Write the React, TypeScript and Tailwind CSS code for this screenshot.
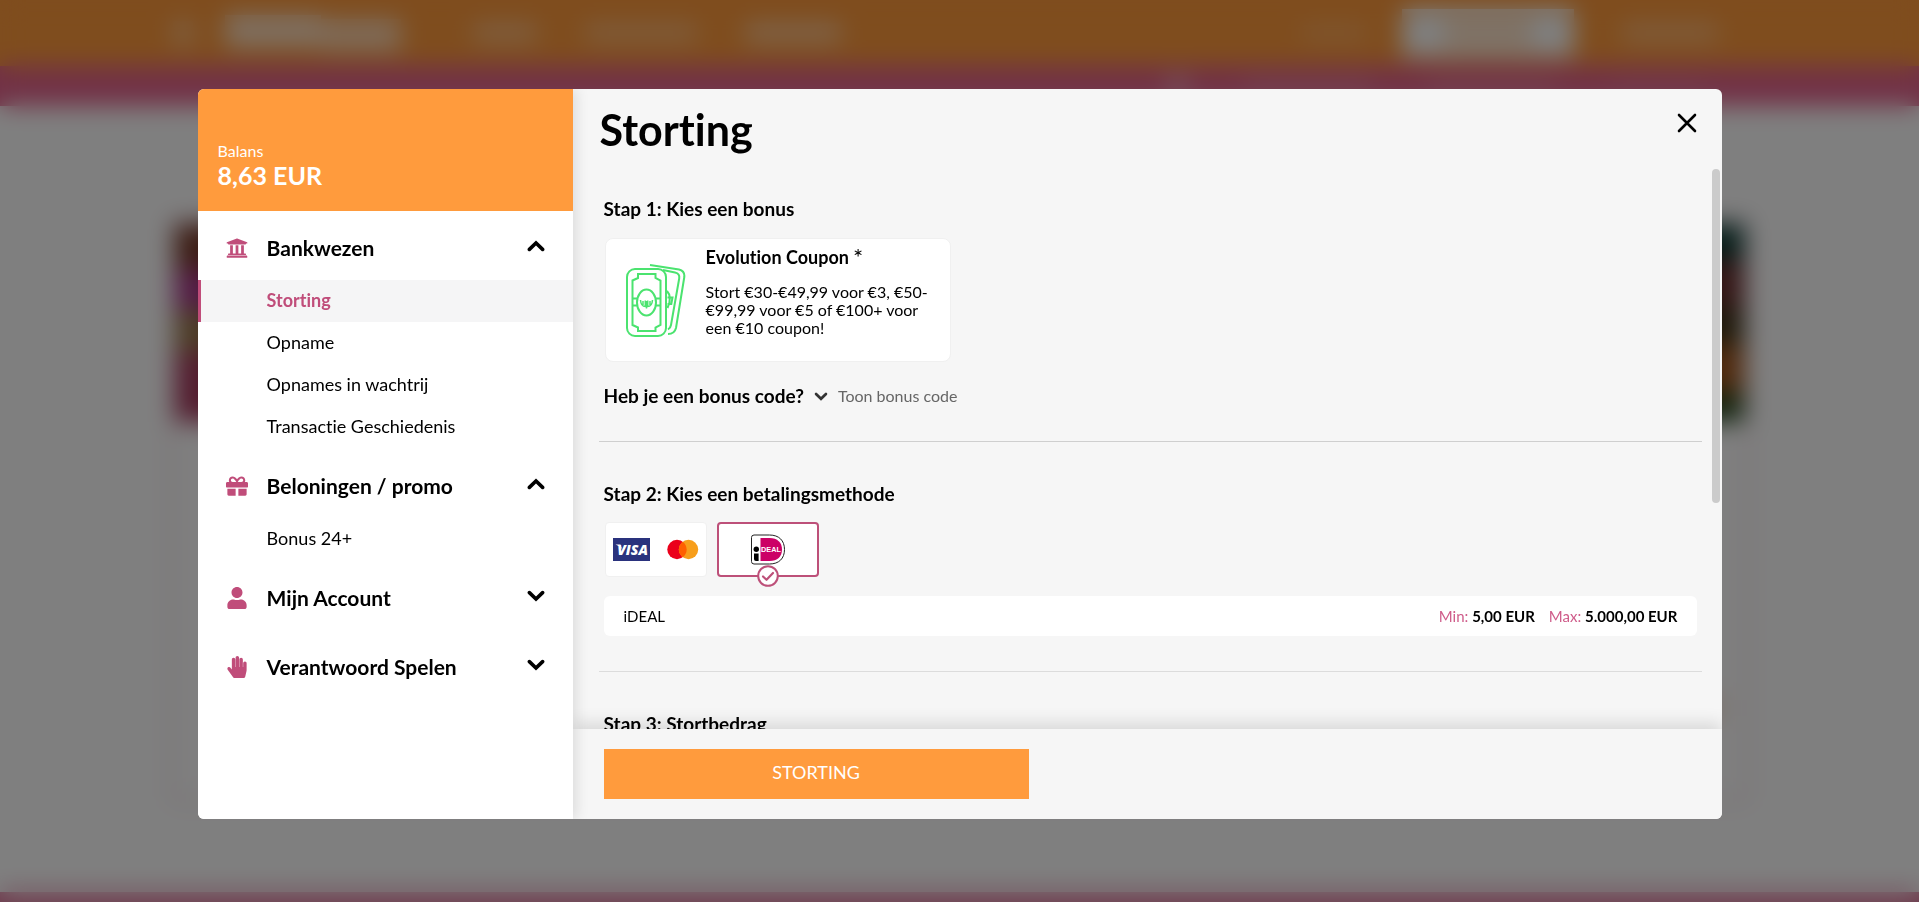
import { useState } from "react";
import type { ReactNode } from "react";
import { FaUniversity, FaGift, FaUser, FaHandPaper } from "react-icons/fa";
import type { IconType } from "react-icons";

type Group = { title: string; icon: IconType; open: boolean; items: string[] };

const groups: Group[] = [
  {
    title: "Bankwezen",
    icon: FaUniversity,
    open: true,
    items: ["Storting", "Opname", "Opnames in wachtrij", "Transactie Geschiedenis"],
  },
  { title: "Beloningen / promo", icon: FaGift, open: true, items: ["Bonus 24+"] },
  { title: "Mijn Account", icon: FaUser, open: false, items: [] },
  { title: "Verantwoord Spelen", icon: FaHandPaper, open: false, items: [] },
];

function Chevron({ up, className }: { up?: boolean; className: string }) {
  return (
    <svg viewBox="0 0 18 12" className={className} fill="none" stroke="currentColor" strokeWidth="3.6" strokeLinecap="round" strokeLinejoin="miter" aria-hidden="true">
      <path d={up ? "M2.4 9.4 9 3l6.6 6.4" : "M2.4 2.6 9 9l6.6-6.4"} />
    </svg>
  );
}

/* Site behind the dialog: seen only through the blurred overlay. */
function SiteBackground() {
  return (
    <div className="absolute inset-0 flex flex-col overflow-hidden bg-white" aria-hidden="true">
      <div className="flex h-[66px] shrink-0 items-center bg-[#ff9a3c] pr-[10.5%] pl-[9%]">
        <div className="h-6 w-5 bg-white/40" />
        <div className="ml-8 flex">
          <div className="h-8 w-24 bg-white/70" />
          <div className="mt-1 h-8 w-20 bg-white/60" />
        </div>
        <div className="ml-18 h-5 w-16 bg-white/35" />
        <div className="ml-12 h-5 w-28 bg-white/30" />
        <div className="ml-12 h-5 w-24 bg-white/45" />
        <div className="ml-auto h-4 w-16 bg-white/20" />
        <div className="ml-9 flex h-12 w-43 items-center justify-center bg-white">
          <div className="h-6 w-22 bg-[#ff9a3c]/35" />
        </div>
        <div className="ml-12 h-5 w-24 bg-white/30" />
      </div>
      <div className="flex h-10 shrink-0 items-center justify-end gap-14 bg-[#e4638c] pr-[11%]">
        <div className="h-5 w-5 bg-white/40" />
        <div className="h-3 w-32 bg-white/20" />
        <div className="h-3 w-32 bg-white/20" />
        <div className="h-3 w-24 bg-white/10" />
      </div>
      <div className="mx-[8.7%] mt-[110px] flex h-[590px] shrink-0 flex-col rounded-lg border-8 border-[#f6ecf0]">
        <div className="flex h-[198px] justify-between">
          <div className="flex w-40 flex-col">
            <div className="h-[46px] bg-[#7a3c2c]" />
            <div className="h-10 bg-[#a8388c]" />
            <div className="h-[42px] bg-[#9a7a4c]" />
            <div className="grow bg-[#a83c60]" />
          </div>
          <div className="flex w-40 flex-col">
            <div className="h-9 bg-[#0c3c34]" />
            <div className="h-12 bg-[#682c2c]" />
            <div className="h-9 bg-[#3c3418]" />
            <div className="h-12 bg-[#a0541c]" />
            <div className="grow bg-[#284a20]" />
          </div>
        </div>
        <div className="mt-auto mr-5 mb-20 ml-auto h-5 w-12 bg-[#f9e0cf]" />
      </div>
      <div className="mt-auto h-2.5 shrink-0 bg-[#e07c9f]" />
    </div>
  );
}

function Sidebar() {
  const [active, setActive] = useState("Storting");
  return (
    <aside className="z-10 flex w-[375px] shrink-0 flex-col bg-white shadow-[4px_0_12px_rgba(0,0,0,0.1)]">
      <div className="flex h-[122px] flex-col justify-end bg-[#ff9b3d] px-5 pb-[22px] text-white">
        <span className="text-base leading-5">Balans</span>
        <strong className="text-[25px] leading-7 font-bold">8,63 EUR</strong>
      </div>
      <nav>
        {groups.map(({ title, icon: Icon, open, items }) => (
          <section key={title}>
            <button type="button" aria-expanded={open} className="flex h-[69px] w-full items-center px-7 pt-2 text-left">
              <Icon className="mb-1 size-[22px] text-[#c04d7a]" />
              <span className="ml-[19px] grow pb-[3px] text-[21px] font-bold">{title}</span>
              <Chevron up={open} className="mb-2 h-3 w-[18px]" />
            </button>
            {open && (
              <ul className="flex flex-col pb-px">
                {items.map((item) => (
                  <li key={item}>
                    <button
                      type="button"
                      onClick={() => setActive(item)}
                      className={
                        item === active
                          ? "flex h-[42px] w-full items-center border-l-3 border-[#c04d7a] bg-[#f5f5f6] pb-0.5 pl-[66px] text-lg font-bold text-[#c04d7a]"
                          : "flex h-[42px] w-full items-center border-l-3 border-transparent pb-0.5 pl-[66px] text-lg"
                      }
                    >
                      {item}
                    </button>
                  </li>
                ))}
              </ul>
            )}
          </section>
        ))}
      </nav>
    </aside>
  );
}

function StepTitle({ children }: { children: ReactNode }) {
  return <h3 className="text-[19px] leading-6 font-bold">{children}</h3>;
}

function BanknotesIcon() {
  return (
    <svg viewBox="0 0 60 74" className="h-[74px] w-[60px] shrink-0" fill="none" stroke="#4be36f" strokeWidth="2" aria-hidden="true">
      <path d="M24 2 53 6.5Q59 8 58.3 14L50 65Q48.5 71 42 71" />
      <path d="M37 7 49 9.5Q54 10.5 53.2 15.5L45 62Q44.5 65 42 66.5" />
      <path d="M41 28Q46.5 34 41.5 45M41.5 34.5H46.5L45.3 41H41.5" />
      <rect x="1" y="6" width="39" height="67" rx="8" />
      <path d="M12 11H29.5V15L34.5 17.5V62L29.5 64.5V68H12V64.5L6.5 62V17.5L12 15Z" />
      <ellipse cx="20.5" cy="39.5" rx="9.5" ry="13" />
      <path d="M6 35.5H11M6 42.5H11M30 35.5H35M30 42.5H35" />
      <path d="M14.5 37Q15 43.5 19.3 43.5V37.5M26.5 37Q26 43.5 21.7 43.5V37.5M17 38V42M24 38V42M20.5 38V45.5" strokeWidth="1.5" />
    </svg>
  );
}

function VisaMastercard() {
  return (
    <svg viewBox="0 0 86 23" className="h-[23px] w-[86px]" role="img" aria-label="Visa Mastercard">
      <rect width="37" height="23" fill="#2a327d" />
      <text x="19.5" y="17" textAnchor="middle" fontFamily="Open Sans, sans-serif" fontWeight="800" fontStyle="italic" fontSize="14" fill="#fff">VISA</text>
      <path d="M2.5 6.5H7.5L9 11Q6.5 7.5 2.5 6.5Z" fill="#fff" />
      <circle cx="64" cy="11.5" r="9.7" fill="#eb001b" />
      <circle cx="75.5" cy="11.5" r="9.7" fill="#f79e1b" />
      <path d="M69.75 3.7a9.7 9.7 0 0 1 0 15.6a9.7 9.7 0 0 1 0-15.6Z" fill="#ff5f00" />
    </svg>
  );
}

function IdealLogo() {
  return (
    <svg viewBox="0 0 36 31" className="h-[31px] w-9" role="img" aria-label="iDEAL">
      <path d="M4 1H19.5C29 1 34.5 6.5 34.5 15.5S29 30 19.5 30H4Q1.5 30 1.5 27.5V3.5Q1.5 1 4 1Z" fill="#fff" stroke="#222" strokeWidth="1" />
      <path d="M10.5 4H19.5C27.5 4 32 8.5 32 15.5S27.5 27 19.5 27H10.5Z" fill="#cc0066" />
      <circle cx="6.3" cy="15.2" r="2.7" fill="#000" />
      <path d="M4 19.5H8.6V27H6Q4 27 4 25Z" fill="#000" />
      <text x="11" y="17.8" fontFamily="Liberation Sans, Arial, sans-serif" fontWeight="700" fontSize="7.3" fill="#fff">DEAL</text>
    </svg>
  );
}

function CheckBadge() {
  return (
    <svg viewBox="0 0 22 22" className="absolute -bottom-3 left-1/2 size-[22px] -translate-x-1/2" aria-hidden="true">
      <circle cx="11" cy="11" r="9.8" fill="#fff" stroke="#bd5079" strokeWidth="2" />
      <path d="M6 11.5 9.5 14.8 16 8" fill="none" stroke="#bd5079" strokeWidth="2.2" strokeLinecap="round" strokeLinejoin="round" />
    </svg>
  );
}

export default function App() {
  return (
    <div className="relative h-screen overflow-hidden font-[Lato,sans-serif] text-black [font-variant-ligatures:none]">
      <SiteBackground />
      <div className="relative flex h-full justify-center bg-black/50 pt-[89px] pl-px backdrop-blur-[12px]">
        <div role="dialog" aria-labelledby="dialog-title" className="flex h-[80.9vh] w-[79.5%] overflow-hidden rounded-md bg-[#f6f6f6]">
          <Sidebar />
          <main className="relative flex min-w-0 grow flex-col">
            <header className="flex h-20 shrink-0 items-start justify-between pt-4 pr-[25px] pl-[27px]">
              <h2 id="dialog-title" className="text-[43px] leading-[50px] font-bold">Storting</h2>
              <button type="button" aria-label="Sluiten" className="mt-2 flex size-5 items-center justify-center">
                <svg viewBox="0 0 20 20" className="size-5" stroke="currentColor" strokeWidth="2.6" strokeLinecap="round" aria-hidden="true">
                  <path d="M2 2 18 18M18 2 2 18" />
                </svg>
              </button>
            </header>

            <div className="min-h-0 grow overflow-hidden pr-5 pl-[26px]">
              <section className="border-b border-[#cfcfcf] px-[5px] pt-7 pb-[33px]">
                <StepTitle>Stap 1: Kies een bonus</StepTitle>
                <button type="button" className="mt-[17px] ml-px flex h-[124px] w-[346px] items-start rounded-lg border border-[#f0f0f0] bg-white pt-1.5 pl-5 text-left">
                  <span className="mt-[18px]"><BanknotesIcon /></span>
                  <span className="ml-5 block w-[228px]">
                    <span className="flex h-6 gap-1 text-lg leading-6 font-bold">
                      Evolution Coupon <span className="text-2xl leading-6 font-normal">*</span>
                    </span>
                    <span className="mt-3.5 block text-base leading-[18px]">
                      Stort €30-€49,99 voor €3, €50-€99,99 voor €5 of €100+ voor een €10 coupon!
                    </span>
                  </span>
                </button>
                <div className="mt-[22px] flex h-6 items-center">
                  <StepTitle>Heb je een bonus code?</StepTitle>
                  <button type="button" className="ml-2.5 flex items-center gap-2.5 text-base leading-6 text-[#666]">
                    <Chevron className="h-[9px] w-3.5 text-[#333]" />
                    Toon bonus code
                  </button>
                </div>
              </section>

              <section className="border-b border-[#dcdcdc] px-[5px] pt-10 pb-[35px]">
                <StepTitle>Stap 2: Kies een betalingsmethode</StepTitle>
                <div className="mt-4 ml-px flex gap-2.5">
                  <button type="button" className="flex h-[55px] w-[102px] items-center justify-center rounded border border-[#f0f0f0] bg-white">
                    <VisaMastercard />
                  </button>
                  <button type="button" aria-pressed="true" className="relative flex h-[55px] w-[102px] items-center justify-center rounded border-2 border-[#bd5079] bg-white">
                    <IdealLogo />
                    <CheckBadge />
                  </button>
                </div>
                <div className="mt-[19px] flex h-10 items-center rounded-md bg-white px-5 text-[15px]">
                  <span className="grow">iDEAL</span>
                  <span><span className="text-[#cf5c8a]">Min:</span> <b>5,00 EUR</b></span>
                  <span className="ml-3.5"><span className="text-[#cf5c8a]">Max:</span> <b>5.000,00 EUR</b></span>
                </div>
              </section>

              <section className="px-[5px] pt-10">
                <StepTitle>Stap 3: Stortbedrag</StepTitle>
              </section>
            </div>

            <div className="absolute top-20 right-0.5 h-[334px] w-2 rounded-full bg-[#cbcbcb]" />

            <footer className="relative h-[90px] shrink-0 bg-[#f6f6f6] px-[31px] pt-5 shadow-[0_-6px_16px_rgba(0,0,0,0.12)]">
              <button type="button" className="h-[50px] w-[425px] bg-[#ff9b3d] pb-[3px] text-lg text-white">STORTING</button>
            </footer>
          </main>
        </div>
      </div>
    </div>
  );
}
